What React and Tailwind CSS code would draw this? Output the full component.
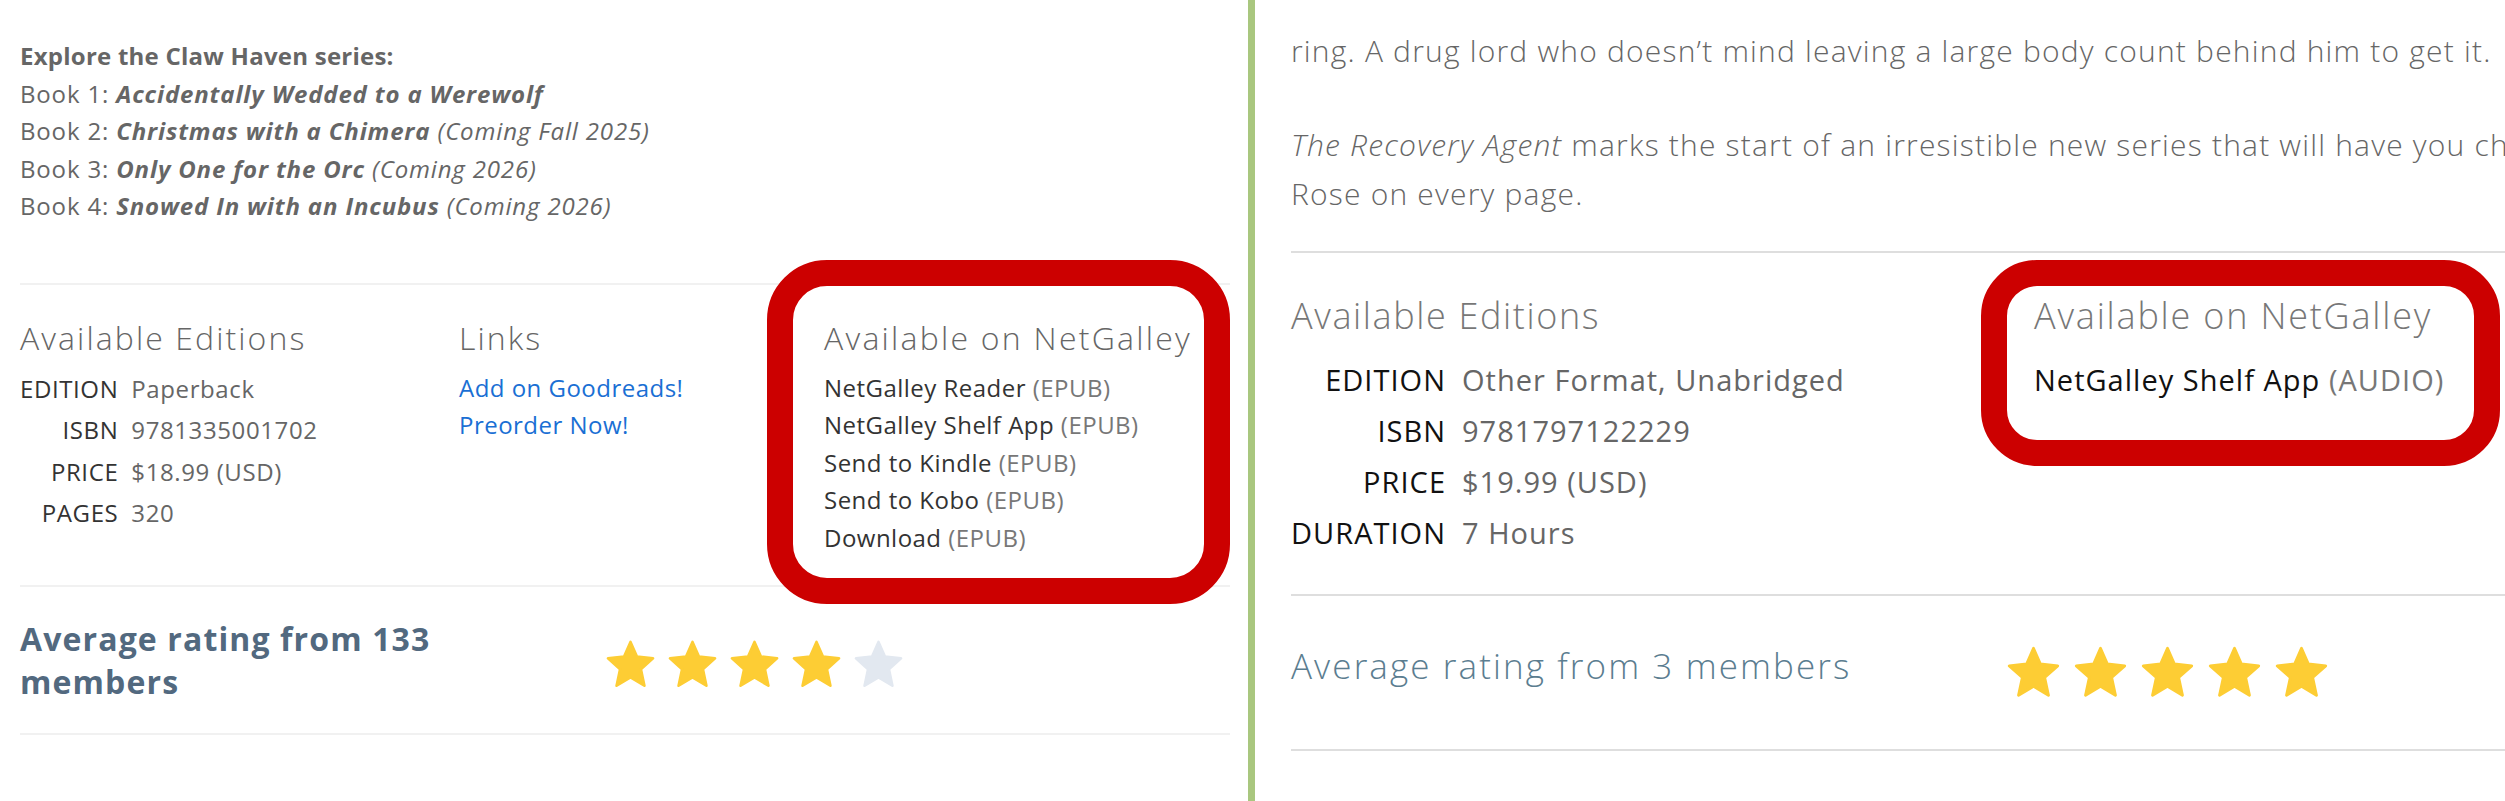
import React from "react";

const STAR =
  "M12 1.8 L14.9 8.4 L22.2 9.2 L16.7 14.1 L18.3 21.6 L12 17.8 L5.7 21.6 L7.3 14.1 L1.8 9.2 L9.1 8.4 Z";

function Star({ size, color }) {
  return (
    <svg width={size} height={size} viewBox="0 0 24 24">
      <path d={STAR} fill={color} stroke={color} strokeWidth="1.2" strokeLinejoin="round" />
    </svg>
  );
}

function Stars({ filled, size, gap }) {
  return (
    <div className={`flex ${gap}`}>
      {[0, 1, 2, 3, 4].map((i) => (
        <Star key={i} size={size} color={i < filled ? "#fdcd34" : "#e2e8f0"} />
      ))}
    </div>
  );
}

const LEFT_EDITION = [
  ["EDITION", "Paperback"],
  ["ISBN", "9781335001702"],
  ["PRICE", "$18.99 (USD)"],
  ["PAGES", "320"],
];

const LEFT_NG = [
  ["NetGalley Reader", "(EPUB)"],
  ["NetGalley Shelf App", "(EPUB)"],
  ["Send to Kindle", "(EPUB)"],
  ["Send to Kobo", "(EPUB)"],
  ["Download", "(EPUB)"],
];

const RIGHT_EDITION = [
  ["EDITION", "Other Format, Unabridged"],
  ["ISBN", "9781797122229"],
  ["PRICE", "$19.99 (USD)"],
  ["DURATION", "7 Hours"],
];

function LeftPanel() {
  return (
    <div className="relative w-[1248px] shrink-0 pl-[20px] pr-[18px] pt-[37px]">
      {/* series list */}
      <div className="text-[24px] leading-[37.5px] tracking-[0.035em] text-[#666]">
        <p className="font-bold tracking-[0.01em]">Explore the Claw Haven series:</p>
        <p>
          Book 1: <b><i>Accidentally Wedded to a Werewolf</i></b>
        </p>
        <p>
          Book 2: <b><i>Christmas with a Chimera</i></b> <i>(Coming Fall 2025)</i>
        </p>
        <p>
          Book 3: <b><i>Only One for the Orc</i></b> <i>(Coming 2026)</i>
        </p>
        <p>
          Book 4: <b><i>Snowed In with an Incubus</i></b> <i>(Coming 2026)</i>
        </p>
      </div>

      <div className="mt-[58px] h-[2px] bg-[#f1f1f1]" />

      {/* columns */}
      <div className="flex pt-[33px] pb-[29px]">
        <div className="w-[439px]">
          <h3 className="text-[32px] leading-[40px] font-light tracking-[0.065em] text-[#666]">Available Editions</h3>
          <div className="mt-[10px] grid grid-cols-[auto_1fr] gap-x-[13px] text-[24px] tracking-[0.025em]">
            {LEFT_EDITION.map(([k, v]) => (
              <React.Fragment key={k}>
                <span className="text-right leading-[41.5px] text-[#333]">{k}</span>
                <span className="leading-[41.5px] text-[#666]">{v}</span>
              </React.Fragment>
            ))}
          </div>
        </div>
        <div className="w-[365px]">
          <h3 className="text-[32px] leading-[40px] font-light tracking-[0.065em] text-[#666]">Links</h3>
          <div className="mt-[11px] flex flex-col text-[24px] leading-[37.5px] tracking-[0.02em] text-[#1a6fd4]">
            <a>Add on Goodreads!</a>
            <a>Preorder Now!</a>
          </div>
        </div>
        <div className="flex-1">
          <h3 className="text-[32px] leading-[40px] font-light tracking-[0.07em] text-[#666]">Available on NetGalley</h3>
          <div className="mt-[11px] flex flex-col text-[24px] leading-[37.5px] tracking-[0.02em] text-[#333]">
            {LEFT_NG.map(([a, b]) => (
              <span key={a}>
                {a} <span className="text-[#777]">{b}</span>
              </span>
            ))}
          </div>
        </div>
      </div>

      <div className="h-[2px] bg-[#f1f1f1]" />

      {/* rating */}
      <div className="flex h-[146px] items-center">
        <p className="w-[584px] text-[32px] leading-[43px] font-bold tracking-[0.035em] text-[#52697f]">
          Average rating from 133
          <br />
          members
        </p>
        <div className="mt-[9px]">
          <Stars filled={4} size={53} gap="gap-[9px]" />
        </div>
      </div>

      <div className="h-[2px] bg-[#f1f1f1]" />

      {/* annotation */}
      <div className="absolute left-[767px] top-[260px] h-[344px] w-[463px] rounded-[60px] border-[26px] border-[#cc0000]" />
    </div>
  );
}

function RightPanel() {
  return (
    <div className="relative min-w-0 flex-1 overflow-hidden pl-[36px] pt-[26px]">
      <div className="w-[1800px] text-[30px] font-light leading-[49.5px] tracking-[0.04em] text-[#666]">
        <p className="whitespace-nowrap">
          ring. A drug lord who doesn’t mind leaving a large body count behind him to get it.
        </p>
        <p className="mt-[44px] whitespace-nowrap">
          <i>The Recovery Agent</i> marks the start of an irresistible new series that will have you cheering for
          <br />
          Rose on every page.
        </p>
      </div>

      <div className="mt-[32px] h-[2px] w-[1800px] bg-[#dedede]" />

      <div className="flex w-[1800px] pt-[41px] pb-[36px]">
        <div className="w-[743px]">
          <h3 className="text-[36px] leading-[44px] font-light tracking-[0.045em] text-[#777]">Available Editions</h3>
          <div className="mt-[16px] grid grid-cols-[auto_1fr] gap-x-[16px] text-[29px] tracking-[0.035em]">
            {RIGHT_EDITION.map(([k, v]) => (
              <React.Fragment key={k}>
                <span className="text-right leading-[51px] text-[#111]">{k}</span>
                <span className="leading-[51px] text-[#666]">{v}</span>
              </React.Fragment>
            ))}
          </div>
        </div>
        <div className="flex-1">
          <h3 className="text-[36px] leading-[44px] font-light tracking-[0.05em] text-[#777]">Available on NetGalley</h3>
          <div className="mt-[16px] text-[29px] leading-[51px] tracking-[0.035em] text-[#111]">
            NetGalley Shelf App <span className="text-[#777]">(AUDIO)</span>
          </div>
        </div>
      </div>

      <div className="h-[2px] w-[1800px] bg-[#dedede]" />

      <div className="flex h-[153px] items-center">
        <p className="w-[714px] pb-[12px] text-[35px] leading-[44px] font-light tracking-[0.06em] text-[#5b7d90]">
          Average rating from 3 members
        </p>
        <Stars filled={5} size={57} gap="gap-[10px]" />
      </div>

      <div className="h-[2px] w-[1800px] bg-[#dedede]" />

      {/* annotation */}
      <div className="absolute left-[726px] top-[260px] h-[206px] w-[519px] rounded-[56px] border-[26px] border-[#cc0000]" />
    </div>
  );
}

export default function App() {
  return (
    <div className="flex h-[801px] w-[2505px] overflow-hidden bg-white font-['Open_Sans','Noto_Sans',sans-serif]">
      <LeftPanel />
      <div className="w-[7px] shrink-0 bg-[#a9c77f]" />
      <RightPanel />
    </div>
  );
}
